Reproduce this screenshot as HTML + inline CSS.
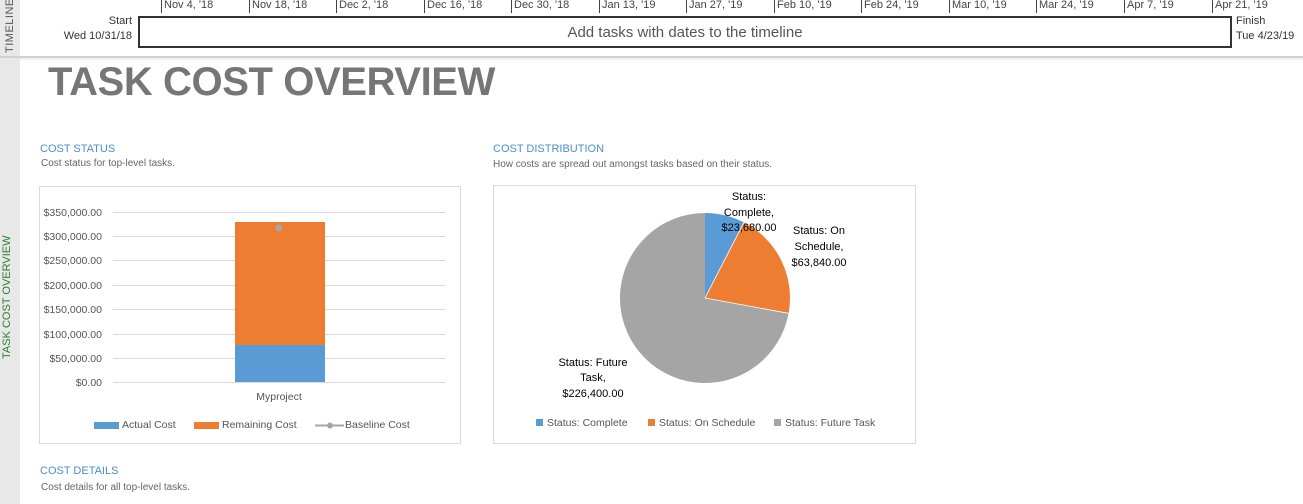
<!DOCTYPE html>
<html><head><style>
body{margin:0;width:1303px;height:504px;background:#fff;position:relative;overflow:hidden;font-family:"Liberation Sans",sans-serif;}
.a{position:absolute;white-space:nowrap;}
.tick{position:absolute;top:0;height:13px;border-left:1px solid #444;font-size:11px;color:#444;padding-left:2px;line-height:11px;}
</style></head><body>
<div class="a" style="left:0;top:0;width:20px;height:504px;background:#e8e8e8"></div>
<div class="a" style="left:0;top:56px;width:1303px;height:2px;background:#d0d0d0"></div>
<div class="a" style="left:20px;top:58px;width:1283px;height:2px;background:#f2f2f2"></div>
<div class="a" style="left:-17px;top:20px;width:54px;font-size:11px;color:#555;transform:rotate(-90deg);letter-spacing:0.5px;text-align:center">TIMELINE</div>
<div class="a" style="left:-48px;top:298px;width:110px;font-size:11px;color:#2e7d32;transform:rotate(-90deg);text-align:center">TASK COST OVERVIEW</div>

<div class="tick" style="left:161px">Nov 4, '18</div>
<div class="tick" style="left:249px">Nov 18, '18</div>
<div class="tick" style="left:336px">Dec 2, '18</div>
<div class="tick" style="left:424px">Dec 16, '18</div>
<div class="tick" style="left:511px">Dec 30, '18</div>
<div class="tick" style="left:599px">Jan 13, '19</div>
<div class="tick" style="left:686px">Jan 27, '19</div>
<div class="tick" style="left:774px">Feb 10, '19</div>
<div class="tick" style="left:861px">Feb 24, '19</div>
<div class="tick" style="left:949px">Mar 10, '19</div>
<div class="tick" style="left:1036px">Mar 24, '19</div>
<div class="tick" style="left:1124px">Apr 7, '19</div>
<div class="tick" style="left:1212px">Apr 21, '19</div>
<div class="a" style="left:40px;top:14px;width:92px;text-align:right;font-size:11px;color:#333;line-height:15px">Start<br>Wed 10/31/18</div>
<div class="a" style="left:1236px;top:14px;font-size:11px;color:#333;line-height:15px">Finish<br>Tue 4/23/19</div>
<div class="a" style="left:138px;top:16px;width:1090px;height:28px;border:2px solid #333;text-align:center;line-height:30px;font-size:15px;color:#555">Add tasks with dates to the timeline</div>

<div class="a" style="left:48px;top:60px;font-size:40px;font-weight:bold;color:#767676;letter-spacing:-0.4px">TASK COST OVERVIEW</div>

<div class="a" style="left:40px;top:143px;font-size:11px;color:#4a8fcc">COST STATUS</div>
<div class="a" style="left:41px;top:158px;font-size:10px;color:#666">Cost status for top-level tasks.</div>
<div class="a" style="left:493px;top:143px;font-size:11px;color:#4a8fcc">COST DISTRIBUTION</div>
<div class="a" style="left:493px;top:159px;font-size:10px;color:#666">How costs are spread out amongst tasks based on their status.</div>
<div class="a" style="left:40px;top:465px;font-size:11px;color:#4a8fcc">COST DETAILS</div>
<div class="a" style="left:41px;top:482px;font-size:10px;color:#666">Cost details for all top-level tasks.</div>

<svg class="a" style="left:39px;top:186px" width="422" height="258" font-family="Liberation Sans" font-size="10.5" fill="#555">
<rect x="0.5" y="0.5" width="421" height="257" fill="#fff" stroke="#d9d9d9"/>
<g stroke="#d9d9d9">
<line x1="74" x2="406" y1="26.5" y2="26.5"/><line x1="74" x2="406" y1="50.5" y2="50.5"/><line x1="74" x2="406" y1="74.5" y2="74.5"/><line x1="74" x2="406" y1="99.5" y2="99.5"/><line x1="74" x2="406" y1="123.5" y2="123.5"/><line x1="74" x2="406" y1="148.5" y2="148.5"/><line x1="74" x2="406" y1="172.5" y2="172.5"/><line x1="74" x2="406" y1="196.5" y2="196.5"/>
</g>
<g text-anchor="end">
<text x="63" y="30">$350,000.00</text><text x="63" y="54">$300,000.00</text><text x="63" y="78">$250,000.00</text><text x="63" y="103">$200,000.00</text><text x="63" y="127">$150,000.00</text><text x="63" y="152">$100,000.00</text><text x="63" y="176">$50,000.00</text><text x="63" y="200">$0.00</text>
</g>
<rect x="196" y="36" width="90" height="123" fill="#ed7d31"/>
<rect x="196" y="159" width="90" height="37" fill="#5b9bd5"/>
<circle cx="240" cy="42" r="3.5" fill="#a5a5a5"/>
<text x="240" y="214" text-anchor="middle">Myproject</text>
<rect x="55" y="236" width="25" height="7" fill="#5b9bd5"/><text x="83" y="242">Actual Cost</text>
<rect x="155" y="236" width="25" height="7" fill="#ed7d31"/><text x="183" y="242">Remaining Cost</text>
<line x1="276" x2="305" y1="239.5" y2="239.5" stroke="#a5a5a5" stroke-width="2"/><circle cx="291" cy="239.5" r="3" fill="#a5a5a5"/><text x="306" y="242">Baseline Cost</text>
</svg>

<svg class="a" style="left:493px;top:185px" width="423" height="259" font-family="Liberation Sans" font-size="11" fill="#000">
<rect x="0.5" y="0.5" width="422" height="258" fill="#fff" stroke="#d9d9d9"/>
<path d="M212 113 L212 28 A85 85 0 0 1 250.9 37.4 Z" fill="#5b9bd5"/>
<path d="M212 113 L250.9 37.4 A85 85 0 0 1 295.6 128.3 Z" fill="#ed7d31"/>
<path d="M212 113 L295.6 128.3 A85 85 0 1 1 212 28 Z" fill="#a5a5a5"/>
<path d="M212 113 L250.9 37.4 M212 113 L295.6 128.3" stroke="#fff" stroke-width="0.8"/>
<g text-anchor="middle">
<text x="256" y="15">Status:</text><text x="256" y="31">Complete,</text><text x="256" y="46">$23,680.00</text>
<text x="326" y="49">Status: On</text><text x="326" y="65">Schedule,</text><text x="326" y="81">$63,840.00</text>
<text x="100" y="181">Status: Future</text><text x="100" y="196">Task,</text><text x="100" y="212">$226,400.00</text>
</g>
<g fill="#555" font-size="10.5">
<rect x="43" y="234" width="7" height="7" fill="#5b9bd5"/><text x="54" y="241">Status: Complete</text>
<rect x="155" y="234" width="7" height="7" fill="#ed7d31"/><text x="166" y="241">Status: On Schedule</text>
<rect x="281" y="234" width="7" height="7" fill="#a5a5a5"/><text x="292" y="241">Status: Future Task</text>
</g>
</svg>
</body></html>
